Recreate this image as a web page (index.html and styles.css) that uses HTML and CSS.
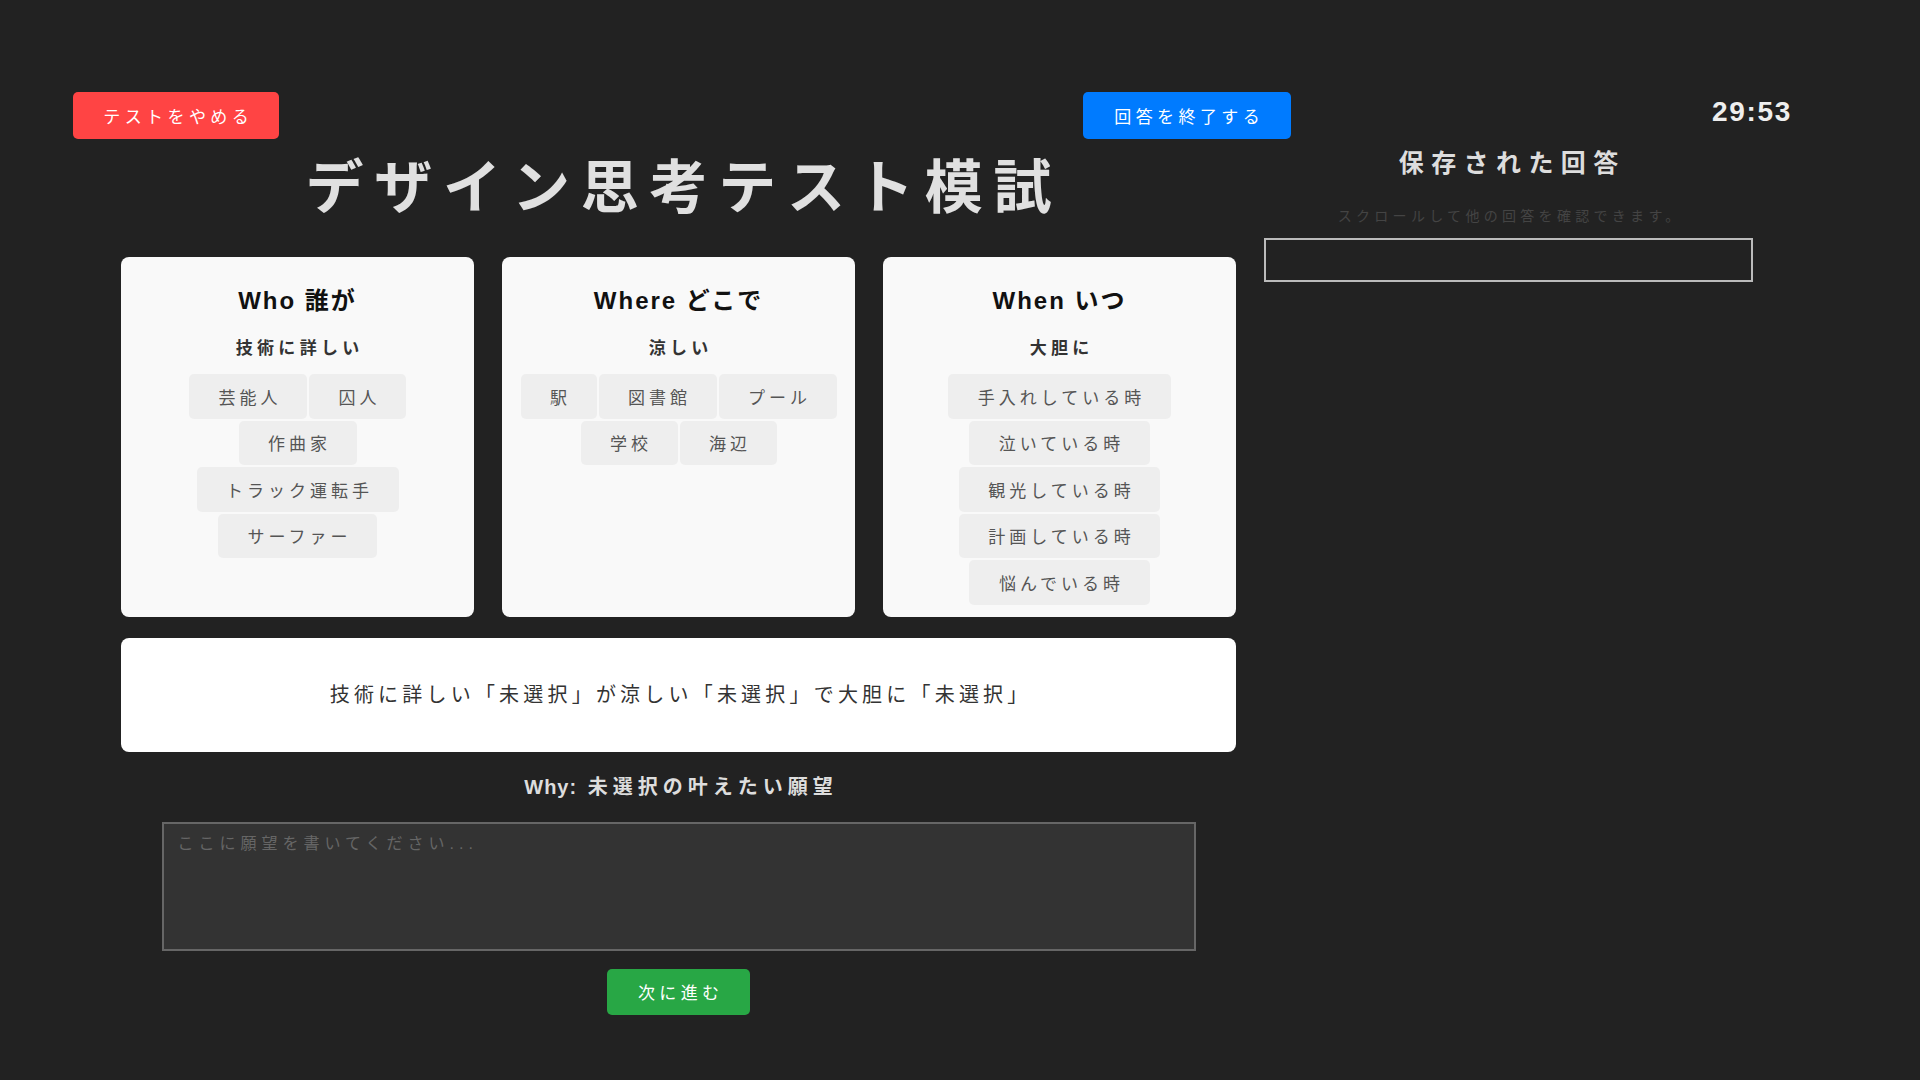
FILE: index.html
```html
<!DOCTYPE html>
<html lang="ja">
<head>
<meta charset="utf-8">
<title>デザイン思考テスト模試</title>
<link rel="stylesheet" href="styles.css">
</head>
<body>
<div class="topbar">
  <button class="btn btn-quit">テストをやめる</button>
  <button class="btn btn-finish">回答を終了する</button>
  <div class="timer">29:53</div>
</div>
<div class="layout">
  <main class="main">
    <h1 class="title">デザイン思考テスト模試</h1>
    <div class="cards">
      <section class="card">
        <h3 class="card-title">Who 誰が</h3>
        <p class="card-sub">技術に詳しい</p>
        <div class="chips">
          <span class="chip">芸能人</span>
          <span class="chip">囚人</span>
          <span class="chip">作曲家</span>
          <span class="chip">トラック運転手</span>
          <span class="chip">サーファー</span>
        </div>
      </section>
      <section class="card">
        <h3 class="card-title">Where どこで</h3>
        <p class="card-sub">涼しい</p>
        <div class="chips">
          <span class="chip">駅</span>
          <span class="chip">図書館</span>
          <span class="chip">プール</span>
          <span class="chip">学校</span>
          <span class="chip">海辺</span>
        </div>
      </section>
      <section class="card">
        <h3 class="card-title">When いつ</h3>
        <p class="card-sub">大胆に</p>
        <div class="chips">
          <span class="chip">手入れしている時</span>
          <span class="chip">泣いている時</span>
          <span class="chip">観光している時</span>
          <span class="chip">計画している時</span>
          <span class="chip">悩んでいる時</span>
        </div>
      </section>
    </div>
    <div class="sentence">技術に詳しい「未選択」が涼しい「未選択」で大胆に「未選択」</div>
    <h2 class="why"><span class="why-label">Why:</span> 未選択の叶えたい願望</h2>
    <textarea class="wish" placeholder="ここに願望を書いてください..."></textarea>
    <button class="btn btn-next">次に進む</button>
  </main>
  <aside class="side">
    <h2 class="side-title">保存された回答</h2>
    <p class="side-note">スクロールして他の回答を確認できます。</p>
    <div class="saved-list"></div>
  </aside>
</div>
</body>
</html>
```

FILE: styles.css
```css
* {
  box-sizing: border-box;
}

html, body {
  margin: 0;
  padding: 0;
}

body {
  background: #222222;
  color: #dddddd;
  font-family: "Liberation Sans", "Noto Sans CJK JP", sans-serif;
  width: 1920px;
  height: 1080px;
  overflow: hidden;
}

.topbar {
  display: flex;
  align-items: center;
  padding: 92px 0 0 73px;
  height: 139px;
}

.btn {
  border: none;
  border-radius: 5px;
  color: #ffffff;
  font-family: "Liberation Sans", "Noto Sans CJK JP", sans-serif;
  font-size: 17px;
  letter-spacing: 4.4px;
  text-indent: 4.4px;
  cursor: pointer;
  padding: 0;
}

.btn-quit {
  width: 206px;
  height: 47px;
  background: #ff4444;
}

.btn-finish {
  width: 208px;
  height: 47px;
  margin-left: 804px;
  background: #007bff;
}

.timer {
  margin-left: 421px;
  margin-top: -8px;
  font-size: 28px;
  font-weight: bold;
  letter-spacing: 1.7px;
  line-height: 32px;
  color: #eeeeee;
}

.layout {
  display: flex;
  align-items: flex-start;
  gap: 28px;
  padding-left: 121px;
}

.main {
  width: 1115px;
  display: flex;
  flex-direction: column;
  align-items: center;
}

.title {
  margin: 17px 0 37px;
  font-size: 58px;
  line-height: 64px;
  font-weight: bold;
  letter-spacing: 10.8px;
  text-indent: 10.8px;
  color: #e0e0e0;
  text-align: center;
}

.cards {
  width: 100%;
  display: grid;
  grid-template-columns: repeat(3, 1fr);
  gap: 28px;
}

.card {
  background: #f9f9f9;
  border-radius: 8px;
  padding: 29px 16px 11px;
  text-align: center;
}

.card-title {
  margin: 0 0 24px;
  font-size: 24px;
  line-height: 29px;
  font-weight: bold;
  letter-spacing: 2px;
  color: #111111;
}

.card-sub {
  margin: 0 0 14px;
  font-size: 17px;
  line-height: 20px;
  font-weight: bold;
  letter-spacing: 4.3px;
  text-indent: 4.3px;
  color: #333333;
}

.chips {
  display: flex;
  flex-wrap: wrap;
  justify-content: center;
}

.chip {
  display: flex;
  align-items: center;
  height: 44.5px;
  margin: 1px;
  padding: 0 25.5px 0 29.5px;
  background: #eeeeee;
  border-radius: 5px;
  font-size: 17px;
  letter-spacing: 4px;
  color: #555555;
  white-space: nowrap;
}

.sentence {
  width: 100%;
  margin-top: 21px;
  padding: 42px 0;
  background: #ffffff;
  border-radius: 8px;
  font-size: 20px;
  line-height: 30px;
  letter-spacing: 4.2px;
  text-indent: 4.2px;
  color: #333333;
  text-align: center;
}

.why {
  margin: 23px 0 0;
  font-size: 20px;
  line-height: 24px;
  font-weight: bold;
  letter-spacing: 5px;
  text-indent: 5px;
  color: #dddddd;
}

.why-label {
  letter-spacing: 1px;
}

.wish {
  display: block;
  width: 1034px;
  height: 129px;
  margin-top: 23px;
  padding: 8px 14px;
  background: #333333;
  border: 2px solid #666666;
  color: #cccccc;
  font-family: "Liberation Sans", "Noto Sans CJK JP", sans-serif;
  font-size: 16px;
  line-height: 24px;
  letter-spacing: 5px;
  resize: none;
  outline: none;
}

.wish::placeholder {
  color: #666666;
}

.btn-next {
  margin-top: 18px;
  width: 143px;
  height: 46px;
  background: #28a745;
}

.side {
  width: 489px;
  text-align: center;
}

.side-title {
  margin: 9px 0 0;
  font-size: 25px;
  line-height: 30px;
  font-weight: bold;
  letter-spacing: 7.4px;
  text-indent: 7.4px;
  color: #dddddd;
}

.side-note {
  margin: 28px 0 0;
  font-size: 14px;
  line-height: 20px;
  letter-spacing: 4.3px;
  text-indent: 4.3px;
  color: #444444;
}

.saved-list {
  margin-top: 12px;
  height: 44px;
  border: 2px solid #bbbbbb;
}
```
